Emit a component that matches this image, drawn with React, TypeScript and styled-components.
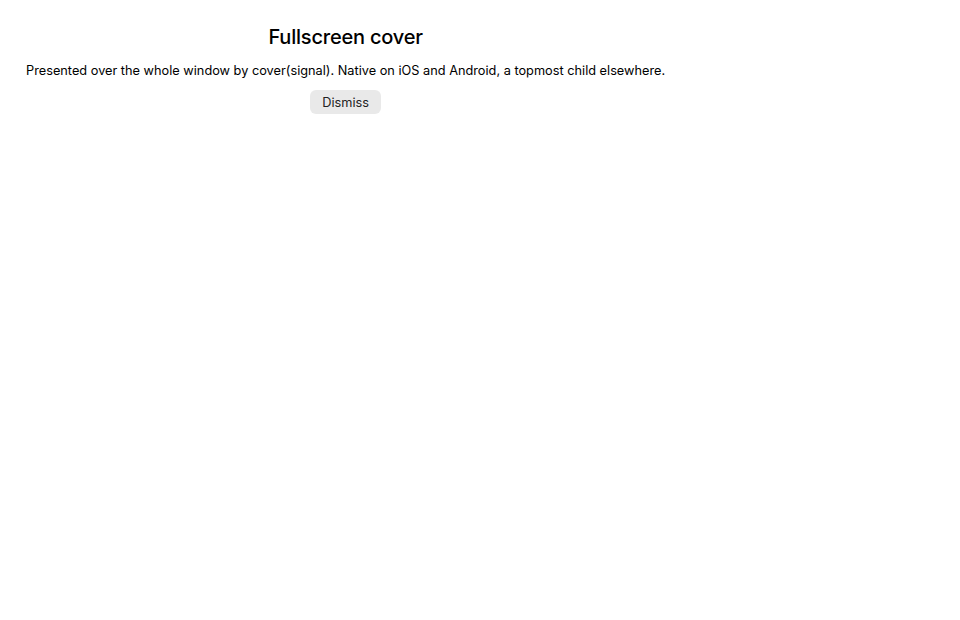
import React from 'react';
import styled, { createGlobalStyle } from 'styled-components';

const GlobalStyle = createGlobalStyle`
  html, body {
    margin: 0;
    padding: 0;
    background: #ffffff;
  }
  body {
    font-family: Inter, "Liberation Sans", sans-serif;
    color: #000;
  }
`;

const Page = styled.div`
  display: flex;
  align-items: flex-start;
  min-height: 100vh;
  padding: 24px 26px;
  box-sizing: border-box;
`;

const Cover = styled.div`
  display: flex;
  flex-direction: column;
  align-items: center;
`;

const Title = styled.h1`
  margin: 0;
  font-size: 20px;
  font-weight: 500;
  line-height: 26px;
  letter-spacing: -0.2px;
`;

const Subtitle = styled.p`
  margin: 13px 0 0;
  font-size: 12.75px;
  line-height: 16px;
  font-weight: 400;
`;

const Button = styled.button`
  margin-top: 11px;
  padding: 0 12px;
  height: 24px;
  border: none;
  border-radius: 6px;
  background: #e9e9e9;
  color: #222;
  font-family: inherit;
  font-size: 12.75px;
  cursor: pointer;
`;

const App: React.FC = () => {
  return (
    <>
      <GlobalStyle />
      <Page>
        <Cover>
          <Title>Fullscreen cover</Title>
          <Subtitle>
            Presented over the whole window by cover(signal). Native on iOS and Android, a topmost child elsewhere.
          </Subtitle>
          <Button type="button">Dismiss</Button>
        </Cover>
      </Page>
    </>
  );
};

export default App;
